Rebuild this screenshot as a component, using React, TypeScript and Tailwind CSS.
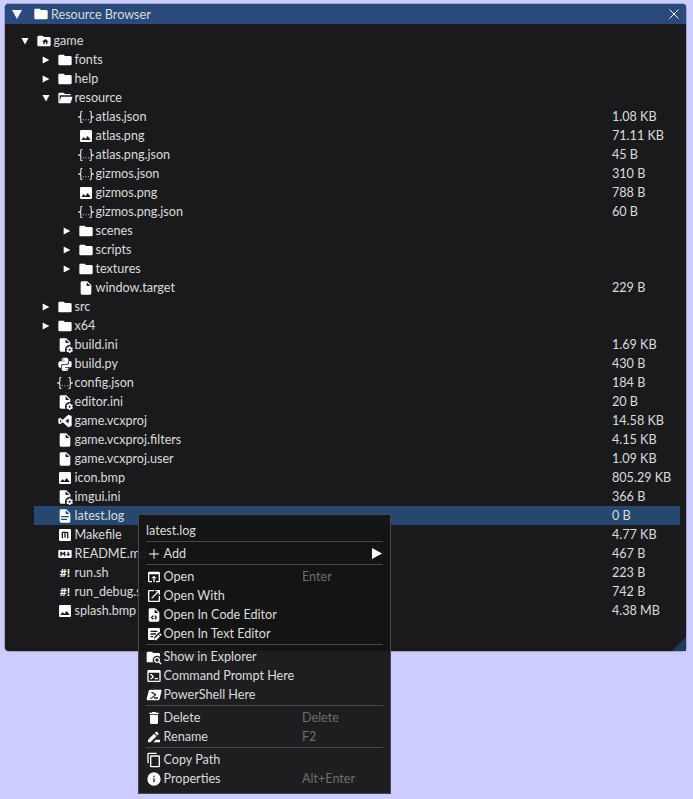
const paths: Record<string, string> = {
  folder: "M10,4H4C2.89,4 2,4.89 2,6V18A2,2 0 0,0 4,20H20A2,2 0 0,0 22,18V8C22,6.89 21.1,6 20,6H12L10,4Z",
  folderOpen: "M19,20H4C2.89,20 2,19.1 2,18V6C2,4.89 2.89,4 4,4H10L12,6H19A2,2 0 0,1 21,8H21L4,8V18L6.14,10H23.21L20.93,18.5C20.7,19.37 19.92,20 19,20Z",
  folderHome: "M20 6H12L10 4H4C2.9 4 2 4.9 2 6V18C2 19.1 2.9 20 4 20H20C21.1 20 22 19.1 22 18V8C22 6.9 21.1 6 20 6M17 13V17H15V14H13V17H11V13H9L14 9L19 13H17Z",
  file: "M13,9V3.5L18.5,9M6,2C4.89,2 4,2.89 4,4V20A2,2 0 0,0 6,22H18A2,2 0 0,0 20,20V8L14,2H6Z",
  fileDoc: "M13,9H18.5L13,3.5V9M6,2H14L20,8V20A2,2 0 0,1 18,22H6C4.89,22 4,21.1 4,20V4C4,2.89 4.89,2 6,2M15,18V16H6V18H15M18,14V12H6V14H18Z",
  image: "M8.5,13.5L11,16.5L14.5,12L19,18H5M21,19V5C21,3.89 20.1,3 19,3H5A2,2 0 0,0 3,5V19A2,2 0 0,0 5,21H19A2,2 0 0,0 21,19Z",
  json: "M5,3H6.5V4.5H5V10A2,2 0 0,1 3,12A2,2 0 0,1 5,14V19.5H6.5V21H5C3.93,20.73 3.5,20.1 3.5,19V15A2,2 0 0,0 1.5,12.7H0V11.3H1.5A2,2 0 0,0 3.5,9V5A2,2 0 0,1 5,3M19,3A2,2 0 0,1 20.5,5V9A2,2 0 0,0 22.5,11.3H24V12.7H22.5A2,2 0 0,0 20.5,15V19A2,2 0 0,1 19,21H17.5V19.5H19V14A2,2 0 0,1 21,12A2,2 0 0,1 19,10V4.5H17.5V3H19M12,15.2A0.8,0.8 0 1,1 12,16.8A0.8,0.8 0 1,1 12,15.2M8,15.2A0.8,0.8 0 1,1 8,16.8A0.8,0.8 0 1,1 8,15.2M16,15.2A0.8,0.8 0 1,1 16,16.8A0.8,0.8 0 1,1 16,15.2Z",
  fileCog: "M6 2C4.9 2 4 2.9 4 4V20C4 21.1 4.9 22 6 22H12.68A7 7 0 0 1 12 19A7 7 0 0 1 19 12A7 7 0 0 1 20 12.08V8L14 2H6M13 3.5L18.5 9H13V3.5M18 14C17.87 14 17.76 14.09 17.74 14.21L17.55 15.53C17.25 15.66 16.96 15.82 16.7 16L15.46 15.5C15.35 15.5 15.22 15.5 15.15 15.63L14.15 17.36C14.09 17.47 14.11 17.6 14.21 17.68L15.27 18.5C15.25 18.67 15.24 18.83 15.24 19C15.24 19.17 15.25 19.33 15.27 19.5L14.21 20.32C14.12 20.4 14.09 20.53 14.15 20.64L15.15 22.37C15.21 22.5 15.34 22.5 15.46 22.5L16.7 22C16.96 22.18 17.24 22.35 17.55 22.47L17.74 23.79C17.76 23.91 17.86 24 18 24H20C20.11 24 20.22 23.91 20.24 23.79L20.43 22.47C20.73 22.34 21 22.18 21.27 22L22.5 22.5C22.63 22.5 22.76 22.5 22.83 22.37L23.83 20.64C23.89 20.53 23.86 20.4 23.77 20.32L22.7 19.5C22.72 19.33 22.74 19.17 22.74 19C22.74 18.83 22.73 18.67 22.7 18.5L23.76 17.68C23.85 17.6 23.88 17.47 23.82 17.36L22.82 15.63C22.76 15.5 22.63 15.5 22.5 15.5L21.27 16C21 15.82 20.73 15.65 20.42 15.53L20.23 14.21C20.22 14.09 20.11 14 20 14H18M19 17.5C19.83 17.5 20.5 18.17 20.5 19C20.5 19.83 19.83 20.5 19 20.5C18.16 20.5 17.5 19.83 17.5 19C17.5 18.17 18.17 17.5 19 17.5Z",
  python: "M19.14,7.5A2.86,2.86 0 0,1 22,10.36V14.14A2.86,2.86 0 0,1 19.14,17H12C12,17.39 12.32,17.96 12.71,17.96H17V19.64A2.86,2.86 0 0,1 14.14,22.5H9.86A2.86,2.86 0 0,1 7,19.64V15.89C7,14.31 8.28,13.04 9.86,13.04H15.11C16.69,13.04 17.96,11.76 17.96,10.18V7.5H19.14M14.86,19.29C14.46,19.29 14.14,19.59 14.14,20.18C14.14,20.77 14.46,20.89 14.86,20.89A0.71,0.71 0 0,0 15.57,20.18C15.57,19.59 15.25,19.29 14.86,19.29M4.86,17.5C3.28,17.5 2,16.22 2,14.64V10.86C2,9.28 3.28,8 4.86,8H12C12,7.61 11.68,7.04 11.29,7.04H7V5.36C7,3.78 8.28,2.5 9.86,2.5H14.14C15.72,2.5 17,3.78 17,5.36V9.11C17,10.69 15.72,11.96 14.14,11.96H8.89C7.31,11.96 6.04,13.24 6.04,14.82V17.5H4.86M9.14,5.71C9.54,5.71 9.86,5.41 9.86,4.82C9.86,4.23 9.54,4.11 9.14,4.11C8.75,4.11 8.43,4.23 8.43,4.82C8.43,5.41 8.75,5.71 9.14,5.71Z",
  vs: "M17.5,15.8V8.2L12.6,12M2,8.5L4.5,7L8.5,10L17,2.5L22,4.5V19.5L17,21.5L8.5,14L4.5,17L2,15.5Z M4.5,9.8V14.2L6.8,12Z",
  make: "M5,3H19A2,2 0 0,1 21,5V19A2,2 0 0,1 19,21H5A2,2 0 0,1 3,19V5A2,2 0 0,1 5,3M9,7A2,2 0 0,0 7,9V17H9V9H11V16H13V9H15V17H17V9A2,2 0 0,0 15,7H9Z",
  markdown: "M20.56 18H3.44C2.65 18 2 17.37 2 16.59V7.41C2 6.63 2.65 6 3.44 6H20.56C21.35 6 22 6.63 22 7.41V16.59C22 17.37 21.35 18 20.56 18M6.81 15.19V11.53L8.73 13.88L10.65 11.53V15.19H12.58V8.81H10.65L8.73 11.16L6.81 8.81H4.89V15.19H6.81M19.69 12H17.77V8.81H15.85V12H13.92L16.81 15.28L19.69 12Z",
  plus: "M19.5,12.7H12.7V19.5H11.3V12.7H4.5V11.3H11.3V4.5H12.7V11.3H19.5V12.7Z",
  openApp: "M12,10L8,14H11V20H13V14H16M19,4H5C3.89,4 3,4.9 3,6V18A2,2 0 0,0 5,20H9V18H5V8H19V18H15V20H19A2,2 0 0,0 21,18V6A2,2 0 0,0 19,4Z",
  openNew: "M14,3V5H17.59L7.76,14.83L9.17,16.24L19,6.41V10H21V3M19,19H5V5H12V3H5C3.89,3 3,3.9 3,5V19A2,2 0 0,0 5,21H19A2,2 0 0,0 21,19V12H19V19Z",
  fileCode: "M14 2H6C4.89 2 4 2.89 4 4V20C4 21.11 4.89 22 6 22H18C19.11 22 20 21.11 20 20V8L14 2M9.54 15.65L11.63 17.74L10.35 19L7 15.65L10.35 12.3L11.63 13.56L9.54 15.65M17 15.65L13.65 19L12.38 17.74L14.47 15.65L12.38 13.56L13.65 12.3L17 15.65M13 9V3.5L18.5 9H13Z",
  textEdit: "M5 3H19A2 2 0 0 1 21 5V9.5H19.5L12.5 16.5V21H5A2 2 0 0 1 3 19V5A2 2 0 0 1 5 3M7 7V9H17V7H7M7 11V13H15V11H7M7 15V17H11V15H7M21.7 11.3L23 12.6C23.3 12.9 23.3 13.4 23 13.7L21.8 14.9L19.4 12.5L20.6 11.3C20.9 11 21.4 11 21.7 11.3M18.6 13.3L21 15.7L15.4 21.3H13V18.9L18.6 13.3Z",
  folderSearch: "M16.5,12C19,12 21,14 21,16.5C21,17.38 20.75,18.21 20.31,18.9L23.39,22L22,23.39L18.88,20.32C18.19,20.75 17.37,21 16.5,21C14,21 12,19 12,16.5C12,14 14,12 16.5,12M16.5,14A2.5,2.5 0 0,0 14,16.5A2.5,2.5 0 0,0 16.5,19A2.5,2.5 0 0,0 19,16.5A2.5,2.5 0 0,0 16.5,14M9,4L11,6H19A2,2 0 0,1 21,8V11.81C19.83,10.69 18.25,10 16.5,10A6.5,6.5 0 0,0 10,16.5C10,17.79 10.37,19 11,20H3C1.89,20 1,19.1 1,18V6C1,4.89 1.89,4 3,4H9Z",
  console: "M20,19V7H4V19H20M20,3A2,2 0 0,1 22,5V19A2,2 0 0,1 20,21H4A2,2 0 0,1 2,19V5C2,3.89 2.9,3 4,3H20M13,17V15H18V17H13M9.58,13L5.57,9H8.4L11.7,12.3C12.09,12.69 12.09,13.33 11.7,13.72L8.42,17H5.59L9.58,13Z",
  powershell: "M21.7,4H6.4C5.3,4 4.3,4.9 4,6L1,18C0.7,19.1 1.4,20 2.5,20H18C19.1,20 20.1,19.1 20.4,18L23.4,6C23.7,4.9 22.8,4 21.7,4M7,7.5L13,12L5.5,17.5H8.5L15,12.5C15.5,12 15.5,11.5 15,11L10,7.5H7M12,15.5V17.5H18V15.5H12Z",
  trash: "M19,4H15.5L14.5,3H9.5L8.5,4H5V6H19M6,19A2,2 0 0,0 8,21H16A2,2 0 0,0 18,19V7H6V19Z",
  rename: "M15 16L11 20H21V16H15M12.06 7.19L3 16.25V20H6.75L15.81 10.94L12.06 7.19M18.71 8.04C19.1 7.65 19.1 7 18.71 6.63L16.37 4.29C16 3.9 15.35 3.9 14.96 4.29L13.13 6.12L16.88 9.87L18.71 8.04Z",
  copy: "M19,21H8V7H19M19,5H8A2,2 0 0,0 6,7V21A2,2 0 0,0 8,23H19A2,2 0 0,0 21,21V7A2,2 0 0,0 19,5M16,1H4A2,2 0 0,0 2,3V17H4V3H16V1Z",
  info: "M13,9H11V7H13M13,17H11V11H13M12,2A10,10 0 0,0 2,12A10,10 0 0,0 12,22A10,10 0 0,0 22,12A10,10 0 0,0 12,2Z",
};

const Icon = ({ name }: { name: string }) => (
  <svg viewBox="0 0 24 24" className="h-4 w-4 shrink-0 fill-white" fillRule="evenodd">
    <path d={paths[name]} />
  </svg>
);

const ArrowRight = () => (
  <svg viewBox="0 0 8 8" className="h-2 w-2 fill-white">
    <polygon points="0.7,0.5 7.3,4 0.7,7.5" />
  </svg>
);

const ArrowDown = () => (
  <svg viewBox="0 0 8 8" className="h-2 w-2 fill-white">
    <polygon points="0.5,1 7.5,1 4,7.5" />
  </svg>
);

type Row = {
  depth: number;
  name: string;
  icon?: string;
  size?: string;
  arrow?: "right" | "down";
  selected?: boolean;
};

const rows: Row[] = [
  { depth: 0, name: "game", icon: "folderHome", arrow: "down" },
  { depth: 1, name: "fonts", icon: "folder", arrow: "right" },
  { depth: 1, name: "help", icon: "folder", arrow: "right" },
  { depth: 1, name: "resource", icon: "folderOpen", arrow: "down" },
  { depth: 2, name: "atlas.json", icon: "json", size: "1.08 KB" },
  { depth: 2, name: "atlas.png", icon: "image", size: "71.11 KB" },
  { depth: 2, name: "atlas.png.json", icon: "json", size: "45 B" },
  { depth: 2, name: "gizmos.json", icon: "json", size: "310 B" },
  { depth: 2, name: "gizmos.png", icon: "image", size: "788 B" },
  { depth: 2, name: "gizmos.png.json", icon: "json", size: "60 B" },
  { depth: 2, name: "scenes", icon: "folder", arrow: "right" },
  { depth: 2, name: "scripts", icon: "folder", arrow: "right" },
  { depth: 2, name: "textures", icon: "folder", arrow: "right" },
  { depth: 2, name: "window.target", icon: "file", size: "229 B" },
  { depth: 1, name: "src", icon: "folder", arrow: "right" },
  { depth: 1, name: "x64", icon: "folder", arrow: "right" },
  { depth: 1, name: "build.ini", icon: "fileCog", size: "1.69 KB" },
  { depth: 1, name: "build.py", icon: "python", size: "430 B" },
  { depth: 1, name: "config.json", icon: "json", size: "184 B" },
  { depth: 1, name: "editor.ini", icon: "fileCog", size: "20 B" },
  { depth: 1, name: "game.vcxproj", icon: "vs", size: "14.58 KB" },
  { depth: 1, name: "game.vcxproj.filters", icon: "file", size: "4.15 KB" },
  { depth: 1, name: "game.vcxproj.user", icon: "file", size: "1.09 KB" },
  { depth: 1, name: "icon.bmp", icon: "image", size: "805.29 KB" },
  { depth: 1, name: "imgui.ini", icon: "fileCog", size: "366 B" },
  { depth: 1, name: "latest.log", icon: "fileDoc", size: "0 B", selected: true },
  { depth: 1, name: "Makefile", icon: "make", size: "4.77 KB" },
  { depth: 1, name: "README.md", icon: "markdown", size: "467 B" },
  { depth: 1, name: "run.sh", size: "223 B" },
  { depth: 1, name: "run_debug.sh", size: "742 B" },
  { depth: 1, name: "splash.bmp", icon: "image", size: "4.38 MB" },
];

const indent = ["ml-[8px]", "ml-[29px]", "ml-[50px]"];

const TreeRow = ({ row }: { row: Row }) => (
  <div className={`flex h-[19px] items-center ${indent[row.depth]} ${row.selected ? "bg-[#26486f]" : ""}`}>
    <div className="flex w-[23px] shrink-0 justify-center pl-px">
      {row.arrow === "right" && <ArrowRight />}
      {row.arrow === "down" && <ArrowDown />}
    </div>
    {row.icon ? (
      <Icon name={row.icon} />
    ) : (
      <span className="w-4 shrink-0 text-center text-[12px] font-bold text-white">#!</span>
    )}
    <span className="ml-[1.5px] flex-1 whitespace-nowrap">{row.name}</span>
    <span className="w-[68px] shrink-0 whitespace-nowrap">{row.size}</span>
  </div>
);

type MenuEntry = { label: string; icon: string; shortcut?: string } | "sep";

const menu: MenuEntry[] = [
  "sep",
  { label: "Add", icon: "plus" },
  "sep",
  { label: "Open", icon: "openApp", shortcut: "Enter" },
  { label: "Open With", icon: "openNew" },
  { label: "Open In Code Editor", icon: "fileCode" },
  { label: "Open In Text Editor", icon: "textEdit" },
  "sep",
  { label: "Show in Explorer", icon: "folderSearch" },
  { label: "Command Prompt Here", icon: "console" },
  { label: "PowerShell Here", icon: "powershell" },
  "sep",
  { label: "Delete", icon: "trash", shortcut: "Delete" },
  { label: "Rename", icon: "rename", shortcut: "F2" },
  "sep",
  { label: "Copy Path", icon: "copy" },
  { label: "Properties", icon: "info", shortcut: "Alt+Enter" },
];

const ContextMenu = () => (
  <div className="absolute left-[138px] top-[514px] w-[253px] border border-[#47474d] bg-[#141414]/95 px-[7px] pb-[5px] pt-[6px]">
    <div className="flex h-[19px] items-center">latest.log</div>
    {menu.map((entry, i) =>
      entry === "sep" ? (
        <div key={i} className="flex h-1 items-start">
          <div className="mt-px h-px w-full bg-[#47474d]" />
        </div>
      ) : (
        <div key={i} className="flex h-[19px] items-center">
          <Icon name={entry.icon} />
          <span className="ml-[1.5px] w-[138.5px] whitespace-nowrap">{entry.label}</span>
          <span className="flex-1 whitespace-nowrap text-[#6e6e6e]">{entry.shortcut}</span>
          {entry.label === "Add" && (
            <svg viewBox="0 0 10 11" className="mr-px h-[11px] w-[10px] fill-white">
              <polygon points="0,0 10,5.5 0,11" />
            </svg>
          )}
        </div>
      )
    )}
  </div>
);

export default function App() {
  return (
    <div className="relative h-[799px] w-[693px] overflow-hidden bg-[#ccccff] pl-[5px] pt-[4px] font-['Lato',sans-serif] text-[12.6px] leading-[15px] text-[#dcdcdc]">
      <div className="relative h-[647px] w-[681px] rounded-[4px] bg-[#1a1a1c] ring-1 ring-[#6e6e80]/40">
        <div className="flex h-5 items-center rounded-t-[4px] bg-[#294a7a] pl-[7px] pr-[6px]">
          <svg viewBox="0 0 10 9" className="h-[9px] w-[10px] fill-white">
            <polygon points="0,0 10,0 5,9" />
          </svg>
          <div className="ml-[11px]">
            <Icon name="folder" />
          </div>
          <span className="ml-[2px] flex-1">Resource Browser</span>
          <svg viewBox="0 0 10 10" className="mr-[1px] h-[10px] w-[10px] stroke-white" strokeWidth="1">
            <path d="M0.5,0.5 L9.5,9.5 M9.5,0.5 L0.5,9.5" />
          </svg>
        </div>
        <div className="pr-[6px] pt-[7px]">
          {rows.map((row) => (
            <TreeRow key={row.name} row={row} />
          ))}
        </div>
        <svg viewBox="0 0 14 14" className="absolute bottom-0 right-0 h-[14px] w-[14px] fill-[#22395a]">
          <polygon points="14,0 14,14 0,14" />
        </svg>
      </div>
      <ContextMenu />
    </div>
  );
}
